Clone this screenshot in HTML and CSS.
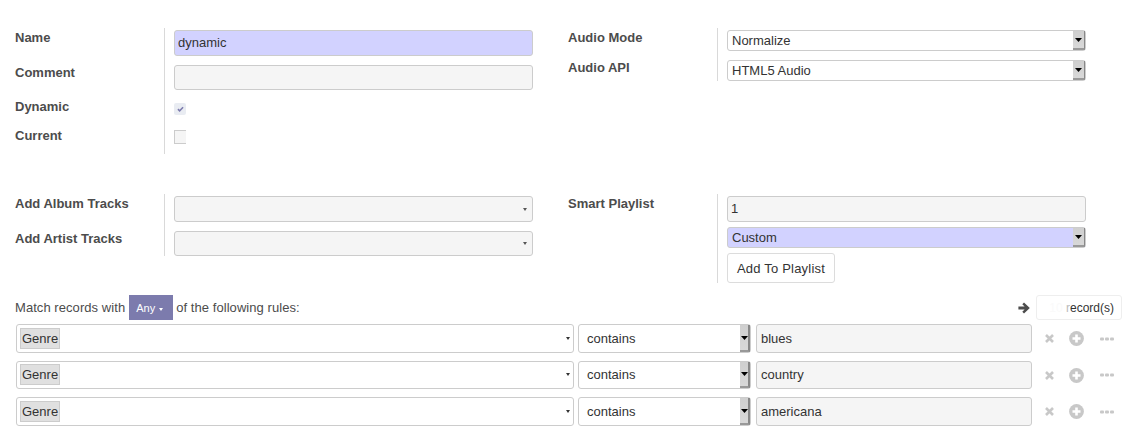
FILE: index.html
```html
<!DOCTYPE html>
<html lang="en">
<head>
  <meta charset="UTF-8">
  <title>Smart Playlist</title>
  <link rel="stylesheet" href="styles.css">
</head>
<body>
  <div class="sheet">
    <div class="group group-top">
      <div class="col">
        <div class="labels">
          <div class="label label-name">Name</div>
          <div class="label label-comment">Comment</div>
          <div class="label label-dynamic">Dynamic</div>
          <div class="label label-current">Current</div>
        </div>
        <div class="fields fields-tall">
          <div class="field field-required">dynamic</div>
          <div class="field field-gray field-comment"></div>
          <div class="check check-on">
            <svg width="7" height="6" viewBox="0 0 8 7"><path d="M1 3.6 3 5.6 7 1.4" fill="none" stroke="#7c7bad" stroke-width="1.8"/></svg>
          </div>
          <div class="check check-off"></div>
        </div>
      </div>
      <div class="col">
        <div class="labels">
          <div class="label label-mode">Audio Mode</div>
          <div class="label label-api">Audio API</div>
        </div>
        <div class="fields">
          <div class="native">
            <span class="native-text">Normalize</span>
            <span class="spin"><svg width="7" height="4" viewBox="0 0 7 4"><path d="M0 0H7L3.5 4Z"/></svg></span>
          </div>
          <div class="native native-next">
            <span class="native-text">HTML5 Audio</span>
            <span class="spin"><svg width="7" height="4" viewBox="0 0 7 4"><path d="M0 0H7L3.5 4Z"/></svg></span>
          </div>
        </div>
      </div>
    </div>

    <div class="group group-mid">
      <div class="col">
        <div class="labels">
          <div class="label label-album">Add Album Tracks</div>
          <div class="label label-artist">Add Artist Tracks</div>
        </div>
        <div class="fields">
          <div class="field field-gray field-drop"><span class="caret"></span></div>
          <div class="field field-gray field-drop field-artist"><span class="caret"></span></div>
        </div>
      </div>
      <div class="col">
        <div class="labels">
          <div class="label label-album">Smart Playlist</div>
        </div>
        <div class="fields">
          <div class="field field-gray">1</div>
          <div class="native native-required">
            <span class="native-text">Custom</span>
            <span class="spin"><svg width="7" height="4" viewBox="0 0 7 4"><path d="M0 0H7L3.5 4Z"/></svg></span>
          </div>
          <button class="btn-add">Add To Playlist</button>
        </div>
      </div>
    </div>

    <div class="match">
      <span>Match records with</span>
      <span class="any">Any <span class="caret caret-white"></span></span>
      <span>of the following rules:</span>
      <svg class="arrow" width="12" height="12" viewBox="0 0 12 12"><path d="M6 .5 11.8 6 6 11.5 4.3 9.8 6.6 7.6H.4V4.4H6.6L4.3 2.2Z" fill="#4c4c4c"/></svg>
      <span class="records"><span class="faded">10 </span><span class="half">r</span>ecord(s)</span>
    </div>

    <div class="rule">
      <div class="rule-field"><span class="tag">Genre</span><span class="caret caret-dark"></span></div>
      <div class="rule-op"><span class="native-text">contains</span><span class="spin spin-op"><svg width="7" height="4" viewBox="0 0 7 4"><path d="M0 0H7L3.5 4Z"/></svg></span></div>
      <div class="rule-value">blues</div>
      <div class="rule-icons">
        <svg width="9" height="9" viewBox="0 0 9 9"><path d="M1 1 8 8M8 1 1 8" stroke="#c8c8c8" stroke-width="2.6"/></svg>
        <svg width="15" height="15" viewBox="0 0 15 15"><circle cx="7.5" cy="7.5" r="7.4" fill="#c8c8c8"/><path d="M7.5 3.5V11.5M3.5 7.5H11.5" stroke="#fff" stroke-width="2.6"/></svg>
        <svg width="14" height="4" viewBox="0 0 14 4"><g fill="#c8c8c8"><rect y=".5" width="4" height="3" rx="1"/><rect x="5" y=".5" width="4" height="3" rx="1"/><rect x="10" y=".5" width="4" height="3" rx="1"/></g></svg>
      </div>
    </div>
    <div class="rule rule-short">
      <div class="rule-field"><span class="tag">Genre</span><span class="caret caret-dark"></span></div>
      <div class="rule-op"><span class="native-text">contains</span><span class="spin spin-op"><svg width="7" height="4" viewBox="0 0 7 4"><path d="M0 0H7L3.5 4Z"/></svg></span></div>
      <div class="rule-value">country</div>
      <div class="rule-icons">
        <svg width="9" height="9" viewBox="0 0 9 9"><path d="M1 1 8 8M8 1 1 8" stroke="#c8c8c8" stroke-width="2.6"/></svg>
        <svg width="15" height="15" viewBox="0 0 15 15"><circle cx="7.5" cy="7.5" r="7.4" fill="#c8c8c8"/><path d="M7.5 3.5V11.5M3.5 7.5H11.5" stroke="#fff" stroke-width="2.6"/></svg>
        <svg width="14" height="4" viewBox="0 0 14 4"><g fill="#c8c8c8"><rect y=".5" width="4" height="3" rx="1"/><rect x="5" y=".5" width="4" height="3" rx="1"/><rect x="10" y=".5" width="4" height="3" rx="1"/></g></svg>
      </div>
    </div>
    <div class="rule">
      <div class="rule-field"><span class="tag">Genre</span><span class="caret caret-dark"></span></div>
      <div class="rule-op"><span class="native-text">contains</span><span class="spin spin-op"><svg width="7" height="4" viewBox="0 0 7 4"><path d="M0 0H7L3.5 4Z"/></svg></span></div>
      <div class="rule-value">americana</div>
      <div class="rule-icons">
        <svg width="9" height="9" viewBox="0 0 9 9"><path d="M1 1 8 8M8 1 1 8" stroke="#c8c8c8" stroke-width="2.6"/></svg>
        <svg width="15" height="15" viewBox="0 0 15 15"><circle cx="7.5" cy="7.5" r="7.4" fill="#c8c8c8"/><path d="M7.5 3.5V11.5M3.5 7.5H11.5" stroke="#fff" stroke-width="2.6"/></svg>
        <svg width="14" height="4" viewBox="0 0 14 4"><g fill="#c8c8c8"><rect y=".5" width="4" height="3" rx="1"/><rect x="5" y=".5" width="4" height="3" rx="1"/><rect x="10" y=".5" width="4" height="3" rx="1"/></g></svg>
      </div>
    </div>
  </div>
</body>
</html>
```

FILE: styles.css
```css
* {
  box-sizing: border-box;
}
body {
  margin: 0;
  background-color: #fff;
  font-family: "Liberation Sans", Arial, sans-serif;
  font-size: 13px;
  color: #4c4c4c;
}
.sheet {
  width: 1134px;
  height: 441px;
  padding: 28px 0 0 15px;
  overflow: hidden;
}
.group {
  display: flex;
  align-items: flex-start;
}
.group-mid {
  margin-top: 40px;
}
.col {
  display: flex;
  align-items: flex-start;
  width: 553px;
}
.labels {
  width: 149px;
  flex: none;
  padding-top: 1px;
}
.label {
  font-weight: bold;
  line-height: 18px;
}
.label-comment {
  margin-top: 17px;
}
.label-dynamic {
  margin-top: 16px;
}
.label-current {
  margin-top: 11px;
}
.label-api {
  margin-top: 12px;
}
.label-artist {
  margin-top: 17px;
}
.fields {
  width: 369px;
  flex: none;
  border-left: 1px solid #d9d9d9;
  padding: 2px 0 0 9px;
}
.fields-tall {
  height: 126px;
}
.field {
  display: flex;
  align-items: center;
  height: 26px;
  padding: 0 3px 2px;
  border: 1px solid #ccc;
  border-radius: 3px;
  color: #333;
}
.field-required {
  background-color: #d2d2ff;
}
.field-gray {
  background-color: #f5f5f5;
}
.field-comment {
  margin-top: 9px;
  height: 25px;
}
.field-drop {
  justify-content: flex-end;
  padding: 0 5px 0 0;
}
.field-artist {
  margin-top: 9px;
  height: 25px;
}
.caret {
  display: inline-block;
  width: 0;
  height: 0;
  border-top: 3px solid #555;
  border-left: 2.5px solid transparent;
  border-right: 2.5px solid transparent;
}
.caret-white {
  border-top-color: #fff;
  vertical-align: middle;
  margin-left: 1px;
}
.caret-dark {
  border-top-color: #333;
}
.check {
  width: 12px;
  height: 12px;
  border-radius: 2px;
}
.check-on {
  display: flex;
  align-items: center;
  justify-content: center;
  margin-top: 13px;
  background-color: #e9ecf2;
}
.check-off {
  margin-top: 15px;
  height: 14px;
  background-color: #f5f5f5;
  border: 1px solid #ccc;
  border-right: 0;
  border-radius: 0;
}
.native {
  display: flex;
  align-items: stretch;
  height: 21px;
  border: 1px solid #ccc;
  border-radius: 3px;
  color: #333;
  background-color: #fff;
}
.native-next {
  margin-top: 9px;
}
.native-required {
  background-color: #d2d2ff;
  margin-top: 5px;
}
.native-text {
  flex: 1;
  line-height: 19px;
  padding-left: 4px;
}
.spin {
  display: flex;
  align-items: center;
  justify-content: center;
  width: 12px;
  background: linear-gradient(#cfcfcf, #d8d8d8);
  border-right: 1px solid #888;
  border-bottom: 2px solid #999;
}
.btn-add {
  display: block;
  margin-top: 5px;
  height: 30px;
  width: 108px;
  padding: 0;
  border: 1px solid #dcdcdc;
  border-radius: 3px;
  background-color: #fff;
  color: #333;
  font: 13px "Liberation Sans", Arial, sans-serif;
  letter-spacing: .2px;
}
.match {
  display: flex;
  align-items: center;
  height: 25px;
  margin-top: 12px;
  gap: 3px;
  letter-spacing: .06px;
}
.any {
  display: inline-block;
  width: 44px;
  height: 25px;
  margin-left: 1px;
  line-height: 26px;
  padding-left: 7px;
  background-color: #7c7bad;
  color: #fff;
  font-size: 11px;
}
.arrow {
  margin-left: auto;
}
.records {
  width: 86px;
  height: 25px;
  margin: 0 12px 0 3px;
  line-height: 24px;
  text-align: right;
  padding-right: 7px;
  border: 1px solid #eee;
  border-radius: 3px;
  font-size: 12px;
  color: #333;
  letter-spacing: 0;
  white-space: nowrap;
}
.faded {
  color: #fafafa;
}
.half {
  color: #bbb;
}
.rule {
  display: flex;
  align-items: stretch;
  height: 29px;
  margin: 4px 0 0 1px;
  color: #333;
}
.rule + .rule {
  margin-top: 8px;
}
.rule-short {
  height: 28px;
}
.rule-field {
  display: flex;
  align-items: center;
  justify-content: space-between;
  width: 558px;
  padding: 0 3px 0 3px;
  border: 1px solid #ccc;
  border-radius: 3px;
}
.tag {
  padding: 2px 1px;
  border: 1px solid #ccc;
  background-color: #e0e0e0;
  line-height: 15px;
}
.rule-op {
  display: flex;
  align-items: stretch;
  width: 173px;
  margin-left: 4px;
  border: 1px solid #ccc;
  border-radius: 3px;
}
.rule-op .native-text {
  line-height: 27px;
  padding-left: 8px;
}
.rule-short .rule-op .native-text,
.rule-short .rule-value {
  line-height: 25px;
}
.rule-short .rule-field {
  padding-bottom: 1px;
}
.spin-op {
  width: 10px;
  border-right-width: 2px;
}
.rule-value {
  width: 276px;
  margin-left: 5px;
  padding-left: 4px;
  line-height: 27px;
  border: 1px solid #ccc;
  border-radius: 3px;
  background-color: #f5f5f5;
}
.rule-icons {
  display: flex;
  align-items: center;
  width: 82px;
  padding-left: 13px;
  gap: 15px;
}
.rule-icons svg:last-child {
  margin-left: 1px;
}
```
